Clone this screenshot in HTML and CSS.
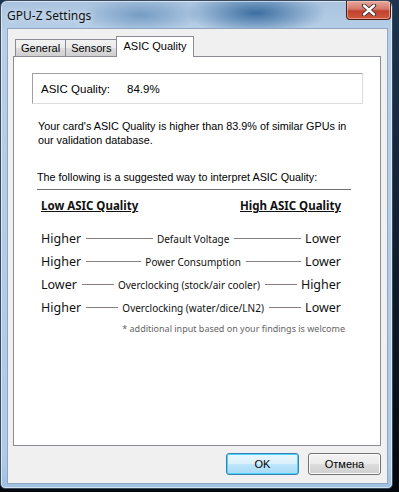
FILE: index.html
```html
<!DOCTYPE html>
<html lang="en">
<head>
    <meta charset="UTF-8">
    <meta name="viewport" content="width=device-width, initial-scale=1.0">
    <title>GPU-Z Settings</title>
    <link rel="stylesheet" href="styles.css">
</head>
<body>
    <div class="window">
        <div class="titlebar">
            <span class="title">GPU-Z Settings</span>
            <button class="close">
                <svg width="16" height="12" viewBox="0 0 16 12">
                    <path d="M3 1.5 L13 10.5 M13 1.5 L3 10.5" stroke="#3b2a2a" stroke-width="4.2" stroke-linecap="round"/>
                    <path d="M3 1.5 L13 10.5 M13 1.5 L3 10.5" stroke="#ffffff" stroke-width="2.4" stroke-linecap="round"/>
                </svg>
            </button>
        </div>
        <div class="client">
            <div class="tabs">
                <span class="tab">General</span>
                <span class="tab">Sensors</span>
                <span class="tab active">ASIC Quality</span>
            </div>
            <div class="panel">
                <div class="quality-box">
                    <span class="q-label">ASIC Quality:</span>
                    <span class="q-value">84.9%</span>
                </div>
                <p class="desc">Your card's ASIC Quality is higher than 83.9% of similar GPUs in our validation database.</p>
                <p class="intro">The following is a suggested way to interpret ASIC Quality:</p>
                <div class="scale">
                    <div class="scale-head">
                        <span>Low ASIC Quality</span>
                        <span>High ASIC Quality</span>
                    </div>
                    <div class="row">
                        <span class="word">Higher</span><span class="line"></span>
                        <span class="label">Default Voltage</span>
                        <span class="line"></span><span class="word">Lower</span>
                    </div>
                    <div class="row">
                        <span class="word">Higher</span><span class="line"></span>
                        <span class="label">Power Consumption</span>
                        <span class="line"></span><span class="word">Lower</span>
                    </div>
                    <div class="row">
                        <span class="word">Lower</span><span class="line"></span>
                        <span class="label">Overclocking (stock/air cooler)</span>
                        <span class="line"></span><span class="word">Higher</span>
                    </div>
                    <div class="row">
                        <span class="word">Higher</span><span class="line"></span>
                        <span class="label">Overclocking (water/dice/LN2)</span>
                        <span class="line"></span><span class="word">Lower</span>
                    </div>
                    <p class="note">* additional input based on your findings is welcome</p>
                </div>
            </div>
            <div class="buttons">
                <button class="btn default">OK</button>
                <button class="btn">Отмена</button>
            </div>
        </div>
    </div>
</body>
</html>
```

FILE: styles.css
```css
*{
    box-sizing: border-box;
}
body{
    margin: 0;
    padding: 0;
    width: 399px;
    height: 492px;
    overflow: hidden;
    background: linear-gradient(180deg, #1d3550 0%, #0f1a28 60%, #05080c 100%);
}

.window{
    width: 393px;
    height: 489px;
    border: 1px solid #3a4a5e;
    border-radius: 7px 7px 5px 5px;
    background:
        radial-gradient(ellipse 70px 22px at 255px 12px, rgba(40, 95, 150, 0.85), rgba(40, 95, 150, 0) 100%),
        radial-gradient(ellipse 60px 18px at 140px 14px, rgba(70, 120, 170, 0.55), rgba(70, 120, 170, 0) 100%),
        linear-gradient(180deg, #a9c3de 0px, #b7cfe8 30px, #aecae6 460px, #9fc0e2 100%);
    box-shadow: inset 0 0 0 1px rgba(255, 255, 255, 0.55);
    display: flex;
    flex-direction: column;
    overflow: hidden;
}

.titlebar{
    height: 27px;
    flex-shrink: 0;
    display: flex;
    align-items: flex-start;
    justify-content: space-between;
}
.title{
    font-family: "Noto Sans", sans-serif;
    font-size: 12px;
    color: #111;
    margin: 6px 0 0 6px;
    text-shadow: 0 0 6px rgba(255, 255, 255, 0.9);
}
.close{
    width: 45px;
    height: 19px;
    margin-right: 1px;
    padding: 0;
    border: 1px solid #4d1d17;
    border-top: none;
    border-radius: 0 0 4px 4px;
    background: linear-gradient(180deg, #e5a99d 0%, #d4786a 45%, #c0412e 55%, #cf5a3e 100%);
    box-shadow: inset 0 0 0 1px rgba(255, 210, 200, 0.5);
    display: flex;
    align-items: center;
    justify-content: center;
}

.client{
    flex: 1;
    margin: 0 4px 4px 6px;
    border: 1px solid #8ea6c2;
    background-color: #f0f0f0;
    display: flex;
    flex-direction: column;
    padding: 7px 6px 0 5px;
}

.tabs{
    display: flex;
    align-items: flex-end;
    height: 20px;
    flex-shrink: 0;
    padding-left: 2px;
    position: relative;
    z-index: 1;
}
.tab{
    font-family: "Liberation Sans", sans-serif;
    font-size: 11px;
    color: #000;
    height: 17px;
    line-height: 16px;
    padding: 0 5px;
    border: 1px solid #898c95;
    border-bottom: none;
    margin-right: -1px;
    background: linear-gradient(180deg, #f2f2f2 0%, #ebebeb 50%, #dddddd 51%, #cfcfcf 100%);
}
.tab.active{
    height: 21px;
    line-height: 18px;
    padding: 0 7px;
    margin-left: -1px;
    background: #fff;
    margin-bottom: -1px;
}

.panel{
    height: 390px;
    flex-shrink: 0;
    background: #fff;
    border: 1px solid #898c95;
    padding: 16px 17px 0 18px;
    font-family: "Liberation Sans", sans-serif;
    font-size: 11px;
    color: #000;
}

.quality-box{
    height: 31px;
    border: 1px solid #dcdcdc;
    border-top-color: #a0a0a0;
    border-left-color: #a0a0a0;
    display: flex;
    align-items: center;
    padding-left: 8px;
    font-size: 11.5px;
}
.q-label{
    width: 86px;
}

.desc{
    margin: 15px 0 0 6px;
    line-height: 14px;
    font-size: 10.8px;
    width: 320px;
}
.intro{
    margin: 24px 12px 0 5px;
    padding-bottom: 6px;
    border-bottom: 1px solid #6e6e6e;
    font-size: 10.8px;
}

.scale{
    padding: 0 22px 0 9px;
    font-family: "Noto Sans", sans-serif;
    color: #111;
}
.scale-head{
    display: flex;
    justify-content: space-between;
    font-weight: bold;
    font-size: 11.5px;
    text-decoration: underline;
    margin-top: 8px;
    height: 18px;
}
.row{
    display: flex;
    align-items: center;
    height: 23px;
}
.scale-head + .row{
    margin-top: 11px;
}
.word{
    font-size: 12.5px;
}
.line{
    flex: 1;
    height: 1px;
    background: #8a7f80;
    margin: 0 4px 0 5px;
}
.label{
    font-size: 10px;
}
.note{
    margin: 3px -4px 0 0;
    text-align: right;
    font-size: 9px;
    color: #666;
}

.buttons{
    display: flex;
    justify-content: flex-end;
    gap: 9px;
    margin-top: 7px;
}
.btn{
    width: 73px;
    height: 22px;
    font-family: "Liberation Sans", sans-serif;
    font-size: 11px;
    color: #000;
    border: 1px solid #707070;
    border-radius: 3px;
    background: linear-gradient(180deg, #f2f2f2 0%, #ebebeb 50%, #dddddd 51%, #cfcfcf 100%);
    box-shadow: inset 0 0 0 1px #fcfcfc;
}
.btn.default{
    border-color: #3c7fb1;
    background: linear-gradient(180deg, #eaf6fd 0%, #d9f0fc 50%, #bee6fd 51%, #a7d9f5 100%);
    box-shadow: inset 0 0 0 1px #48d4fe;
}
```
